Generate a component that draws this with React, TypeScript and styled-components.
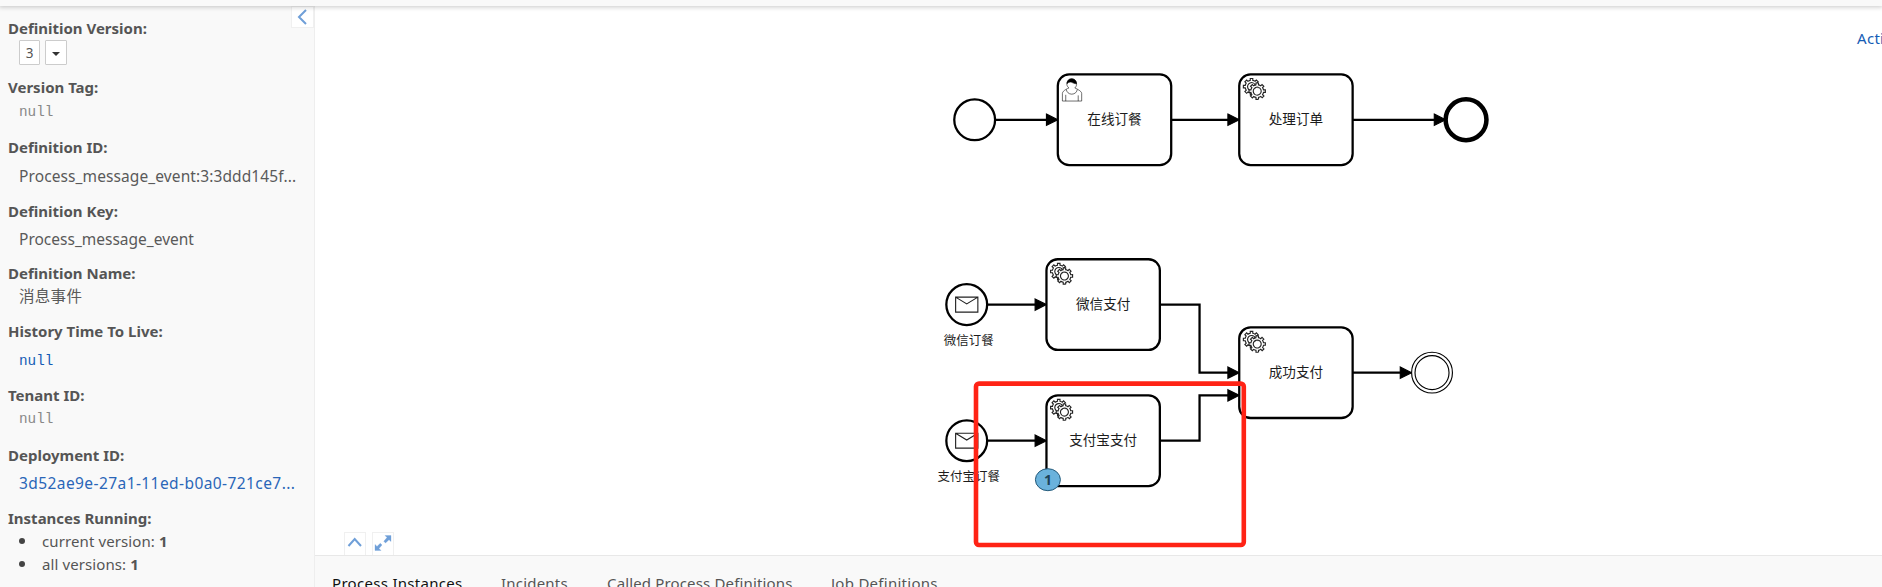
import React from "react";
import styled, { createGlobalStyle } from "styled-components";

const Global = createGlobalStyle`
  * { box-sizing: border-box; }
  html, body { margin: 0; padding: 0; overflow: hidden; }
  body {
    font-family: "Noto Sans", "Noto Sans CJK SC", sans-serif;
    font-size: 15px;
    color: #555;
    background: #fff;
  }
`;

const Page = styled.div`
  display: flex;
  flex-direction: column;
  width: 1882px;
  height: 587px;
  overflow: hidden;
`;

const TopBar = styled.header`
  flex: none;
  height: 6px;
  background: #f9f9f9;
  box-shadow: 0 0 5px 1px rgba(0, 0, 0, 0.22);
  position: relative;
  z-index: 1;
`;

const Body = styled.div`
  flex: 1;
  display: flex;
  min-height: 0;
`;

const Sidebar = styled.aside`
  flex: none;
  display: flex;
  justify-content: space-between;
  width: 315px;
  background: #f9f9f9;
  border-right: 1px solid #eee;
`;

const Facts = styled.dl`
  margin: 0;
  padding: 12px 0 0 8px;
  width: 291px;
`;

const Term = styled.dt<{ $gap?: number }>`
  height: 20px;
  margin-top: ${(p) => p.$gap ?? 0}px;
  line-height: 20px;
  font-size: 15px;
  font-weight: 700;
  white-space: nowrap;
`;

const Value = styled.dd<{ $gap?: number; $tone?: string; $mono?: boolean; $track?: number }>`
  height: 20px;
  margin: ${(p) => p.$gap ?? 0}px 0 0 11px;
  line-height: 20px;
  white-space: nowrap;
  color: ${(p) => p.$tone ?? "#5a5a5a"};
  font-family: ${(p) => (p.$mono ? '"Liberation Mono", monospace' : "inherit")};
  font-size: ${(p) => (p.$mono ? 14.3 : 15.5)}px;
  letter-spacing: ${(p) => p.$track ?? 0}px;
`;

const VersionPicker = styled.dd`
  display: flex;
  gap: 5px;
  height: 25px;
  margin: 2px 0 0 11px;
`;

const VersionButton = styled.span`
  display: flex;
  align-items: center;
  justify-content: center;
  width: 21px;
  height: 25px;
  border: 1px solid #ccc;
  border-radius: 1px;
  background: #fff;
  font-size: 13.5px;
  & + & { width: 22px; }
`;

const Caret = styled.span`
  margin-top: 2px;
  border: 4px solid transparent;
  border-top-color: #333;
  border-bottom: 0;
`;

const Counts = styled.ul`
  margin: 3px 0 0 11px;
  padding: 0;
  list-style: none;
`;

const Count = styled.li`
  display: flex;
  align-items: center;
  height: 20px;
  margin-bottom: 3px;
  line-height: 20px;
  white-space: pre;
  letter-spacing: 0.1px;
  &::before {
    content: "";
    width: 6px;
    height: 6px;
    margin-right: 17px;
    border-radius: 50%;
    background: #444;
  }
`;

const CollapseTab = styled.div`
  width: 23px;
  height: 22px;
  background: #fff;
  border: 1px solid #f0f0f0;
`;

const Main = styled.main`
  flex: 1;
  display: flex;
  flex-direction: column;
  min-width: 0;
`;

const Canvas = styled.section`
  position: relative;
  height: 549px;
`;

const Diagram = styled.svg`
  display: block;
  width: 1567px;
  height: 549px;
  font-family: "Noto Sans CJK SC", sans-serif;
`;

const ActionLink = styled.a`
  position: absolute;
  top: 22px;
  left: 1542px;
  line-height: 20px;
  white-space: nowrap;
  letter-spacing: 0.3px;
  color: #155cb5;
`;

const CanvasTools = styled.div`
  position: absolute;
  left: 29px;
  bottom: 0;
  display: flex;
  gap: 6px;
`;

const Tool = styled.span`
  width: 22px;
  height: 23px;
  border: 1px solid #f0f0f0;
  border-bottom: 0;
  svg { display: block; }
`;

const Tabs = styled.nav`
  flex: 1;
  display: flex;
  padding: 17px 0 0 17px;
  background: #f9f9f9;
  border-top: 1px solid #e8e8e8;
`;

const Tab = styled.span<{ $active?: boolean; $w: number; $track?: number }>`
  width: ${(p) => p.$w}px;
  line-height: 20px;
  white-space: nowrap;
  color: ${(p) => (p.$active ? "#111" : "#555")};
  letter-spacing: ${(p) => p.$track ?? 0}px;
`;

const GEAR =
  "v -1.71335 c 0.352326,-0.0705 0.703932,-0.17838 1.047628,-0.32133 0.344416,-0.14465 0.665822,-0.32133 0.966377,-0.52145 l 1.19431,1.18005 1.567487,-1.57688 -1.195028,-1.18014 c 0.403376,-0.61394 0.683079,-1.29908 0.825447,-2.01824 l 1.622133,-0.01 v -2.2196 l -1.636514,0.01 c -0.07333,-0.35153 -0.178319,-0.70024 -0.323564,-1.04372 -0.145244,-0.34406 -0.321407,-0.6644 -0.522735,-0.96217 l 1.131035,-1.13631 -1.583305,-1.56293 -1.129598,1.13589 c -0.614052,-0.40108 -1.302883,-0.68093 -2.022633,-0.82247 l 0.0093,-1.61852 h -2.241173 l 0.0042,1.63124 c -0.353763,0.0736 -0.705369,0.17977 -1.049785,0.32371 -0.344415,0.14437 -0.665102,0.32092 -0.9635006,0.52006 l -1.1698628,-1.15823 -1.5667691,1.5792 1.1684265,1.15669 c -0.4026573,0.61283 -0.68308,1.29797 -0.8247287,2.01713 l -1.6588041,0.003 v 2.22174 l 1.6724648,-0.006 c 0.073327,0.35077 0.1797598,0.70243 0.3242851,1.04472 0.1452428,0.34448 0.3214064,0.6644 0.5227339,0.96066 l -1.1993431,1.19723 1.5840256,1.56011 1.1964668,-1.19348 c 0.6140517,0.40346 1.3028827,0.68232 2.0233517,0.82331 l 7.19e-4,1.69892 h 2.226848 z m 0.221462,-3.9957 c -1.788948,0.7502 -3.8576,-0.0928 -4.6097055,-1.87438 -0.7521065,-1.78321 0.090598,-3.84627 1.8802645,-4.59604 1.78823,-0.74936 3.856881,0.0929 4.608987,1.87437 0.752106,1.78165 -0.0906,3.84612 -1.879546,4.59605 z";

const Gears = () => (
  <g fill="#fff" stroke="#222" strokeWidth={1}>
    <path d={`m 12,18 ${GEAR}`} />
    <circle cx={16} cy={17} r={5} stroke="none" />
    <path d={`m 17,22 ${GEAR}`} />
  </g>
);

const Person = () => (
  <g fill="#fff" stroke="#000" strokeWidth={0.5}>
    <path d="m 15,12 c 0.909,-0.845 1.594,-2.049 1.594,-3.385 0,-2.554 -1.805,-4.622 -4.357,-4.622 -2.552,0 -4.288,2.068 -4.288,4.622 0,1.348 0.974,2.562 1.896,3.405 -0.529,0.187 -5.669,2.097 -5.794,4.756 v 6.718 h 17 v -6.718 c 0,-2.298 -5.528,-4.595 -6.051,-4.776 z m -8,6 l 0,5.5 m 11,0 l 0,-5" />
    <path d="m 17.162,13.009 c 0,2.447 -2.158,4.431 -4.821,4.431 -2.665,0 -4.822,-1.981 -4.822,-4.431" />
    <path fill="#000" d="m 8.1,8.2 c 0,0 2.251,-2.358 4.274,-1.177 2.024,1.181 4.221,1.537 4.124,0.965 -0.098,-0.57 -0.117,-3.791 -4.191,-4.136 -3.572,0 -4.208,3.008 -4.207,4.348 z" />
  </g>
);

const Task = ({ x, y, name, user }: { x: number; y: number; name: string; user?: boolean }) => (
  <g transform={`translate(${x} ${y})`}>
    <rect width={100} height={80} rx={10} fill="#fff" stroke="#000" strokeWidth={2} />
    {user ? <Person /> : <Gears />}
    <text x={50} y={43.8} fontSize={12} textAnchor="middle" fill="#1c1c1c">{name}</text>
  </g>
);

const Flow = ({ d, x, y }: { d: string; x: number; y: number }) => (
  <g>
    <path d={d} fill="none" stroke="#000" strokeWidth={2} />
    <path d={`M${x - 10} ${y - 5}L${x} ${y}L${x - 10} ${y + 5}Z`} stroke="#000" strokeWidth={1} />
  </g>
);

const MessageStart = ({ x, y, name }: { x: number; y: number; name: string }) => (
  <g transform={`translate(${x} ${y})`}>
    <circle r={18} fill="#fff" stroke="#000" strokeWidth={2} />
    <path d="M-9.8 -6.6H9.8V6.6H-9.8ZL0 -0.6L9.8 -6.6" fill="#fff" stroke="#222" strokeWidth={1} />
    <text x={1.8} y={35.3} fontSize={11} textAnchor="middle" fill="#1c1c1c">{name}</text>
  </g>
);

const App = () => (
  <Page>
    <Global />
    <TopBar />
    <Body>
      <Sidebar>
        <Facts>
          <Term>Definition Version:</Term>
          <VersionPicker>
            <VersionButton>3</VersionButton>
            <VersionButton><Caret /></VersionButton>
          </VersionPicker>
          <Term $gap={12}>Version Tag:</Term>
          <Value $gap={5} $mono $tone="#888">null</Value>
          <Term $gap={15}>Definition ID:</Term>
          <Value $gap={9} $track={0.1}>Process_message_event:3:3ddd145f...</Value>
          <Term $gap={15}>Definition Key:</Term>
          <Value $gap={8}>Process_message_event</Value>
          <Term $gap={14}>Definition Name:</Term>
          <Value $gap={3} $track={0.3}>消息事件</Value>
          <Term $gap={15}>History Time To Live:</Term>
          <Value $gap={10} $mono $tone="#155cb5">null</Value>
          <Term $gap={14}>Tenant ID:</Term>
          <Value $gap={4} $mono $tone="#888">null</Value>
          <Term $gap={16}>Deployment ID:</Term>
          <Value $gap={8} $tone="#2a66b8" $track={0.42}>3d52ae9e-27a1-11ed-b0a0-721ce7...</Value>
          <Term $gap={15}>Instances Running:</Term>
          <Counts>
            <Count>current version: <b>1</b></Count>
            <Count>all versions: <b>1</b></Count>
          </Counts>
        </Facts>
        <CollapseTab>
          <svg width={20} height={20} fill="none" stroke="#6f9fd8" strokeWidth={2}>
            <path d="M14 3L7 10L14 17" />
          </svg>
        </CollapseTab>
      </Sidebar>
      <Main>
        <Canvas>
          <Diagram viewBox="315 6 1567 549">
            <g transform="translate(1057.8 74.4) scale(1.134)">
              <Flow d="M-55 40H-4" x={0} y={40} />
              <Flow d="M100 40H156" x={160} y={40} />
              <Flow d="M260 40H338" x={342} y={40} />
              <Flow d="M-62 203H-14" x={-10} y={203} />
              <Flow d="M-62 323H-14" x={-10} y={323} />
              <Flow d="M90 203H125V263H156" x={160} y={263} />
              <Flow d="M90 323H125V283H156" x={160} y={283} />
              <Flow d="M260 263H308" x={312} y={263} />
              <circle cx={-73.3} cy={40} r={18} fill="#fff" stroke="#000" strokeWidth={2} />
              <circle cx={360} cy={40} r={18} fill="#fff" stroke="#000" strokeWidth={4} />
              <g fill="#fff" stroke="#000" strokeWidth={1}>
                <circle cx={330} cy={263} r={18} />
                <circle cx={330} cy={263} r={15} />
              </g>
              <Task x={0} y={0} name="在线订餐" user />
              <Task x={160} y={0} name="处理订单" />
              <Task x={-10} y={163} name="微信支付" />
              <Task x={-10} y={283} name="支付宝支付" />
              <Task x={160} y={223} name="成功支付" />
              <MessageStart x={-80.3} y={203} name="微信订餐" />
              <MessageStart x={-80.3} y={323} name="支付宝订餐" />
            </g>
            <rect x={1035.4} y={468.7} width={25} height={22} rx={12.5} ry={11} fill="#6ab2dc" stroke="#245a7a" />
            <text x={1048} y={485} fontSize={14} fontWeight={700} fontFamily="Noto Sans, sans-serif" fill="#1d4258" textAnchor="middle">1</text>
            <rect x={976} y={383.6} width={267.8} height={161.4} rx={3} fill="none" stroke="#ff2315" strokeWidth={4.6} />
          </Diagram>
          <ActionLink>Activity</ActionLink>
          <CanvasTools>
            <Tool>
              <svg width={20} height={22} fill="none" stroke="#6f9fd8" strokeWidth={2}>
                <path d="M3.5 13L9.7 6L16 13" />
              </svg>
            </Tool>
            <Tool>
              <svg width={20} height={22} fill="#6f9fd8" stroke="#6f9fd8">
                <path d="M12 2.5H18V8.5L16 6.7L12.5 10L10.8 8.3L14 4.6ZM8 17.5H2V11.5L4 13.4L7.3 10.3L9 12L6 15.5Z" strokeWidth={0.3} />
              </svg>
            </Tool>
          </CanvasTools>
        </Canvas>
        <Tabs>
          <Tab $active $w={169} $track={0.3}>Process Instances</Tab>
          <Tab $w={106} $track={0.2}>Incidents</Tab>
          <Tab $w={224} $track={0.15}>Called Process Definitions</Tab>
          <Tab $w={120} $track={0.27}>Job Definitions</Tab>
        </Tabs>
      </Main>
    </Body>
  </Page>
);

export default App;
